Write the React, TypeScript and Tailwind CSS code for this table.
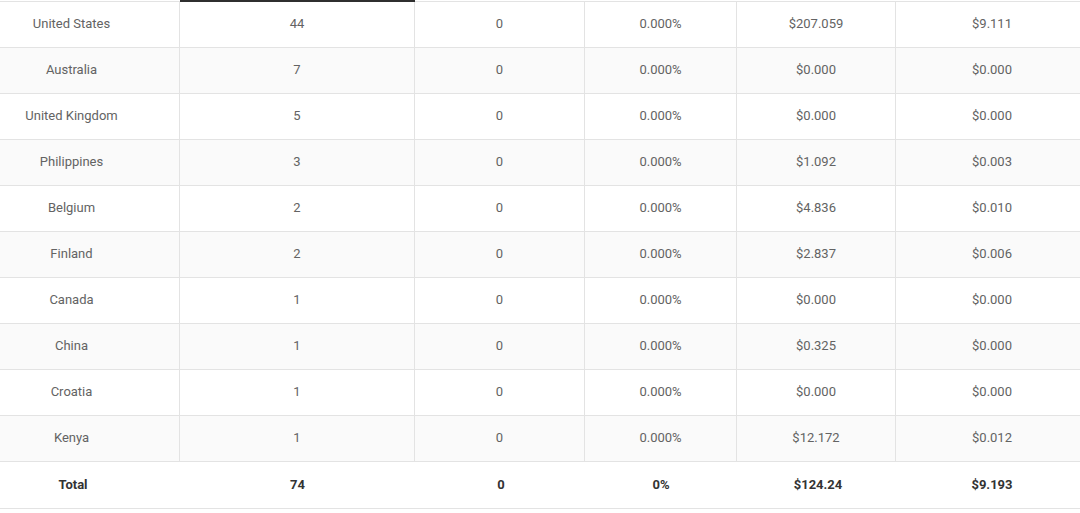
import React from 'react'

type Row = {
  country: string
  clicks: string
  conv: string
  rate: string
  spend: string
  cpc: string
}

const rows: Row[] = [
  { country: 'United States', clicks: '44', conv: '0', rate: '0.000%', spend: '$207.059', cpc: '$9.111' },
  { country: 'Australia', clicks: '7', conv: '0', rate: '0.000%', spend: '$0.000', cpc: '$0.000' },
  { country: 'United Kingdom', clicks: '5', conv: '0', rate: '0.000%', spend: '$0.000', cpc: '$0.000' },
  { country: 'Philippines', clicks: '3', conv: '0', rate: '0.000%', spend: '$1.092', cpc: '$0.003' },
  { country: 'Belgium', clicks: '2', conv: '0', rate: '0.000%', spend: '$4.836', cpc: '$0.010' },
  { country: 'Finland', clicks: '2', conv: '0', rate: '0.000%', spend: '$2.837', cpc: '$0.006' },
  { country: 'Canada', clicks: '1', conv: '0', rate: '0.000%', spend: '$0.000', cpc: '$0.000' },
  { country: 'China', clicks: '1', conv: '0', rate: '0.000%', spend: '$0.325', cpc: '$0.000' },
  { country: 'Croatia', clicks: '1', conv: '0', rate: '0.000%', spend: '$0.000', cpc: '$0.000' },
  { country: 'Kenya', clicks: '1', conv: '0', rate: '0.000%', spend: '$12.172', cpc: '$0.012' },
]

const cols = 'grid grid-cols-[180px_235px_170px_152px_159px_184px]'

export default function App() {
  return (
    <div className="w-[1080px] h-[513px] overflow-hidden bg-white font-['Roboto',sans-serif] text-[13px]">
      {/* top edge, header scrolled out of view */}
      <div className={cols}>
        <div className="h-px" />
        <div className="h-[2px] bg-[#2f2f2f]" />
      </div>
      <div className="-mt-px border-t border-[#e3e3e3]" />

      {rows.map((r, i) => (
        <div
          key={r.country}
          className={`${cols} h-[46px] border-b border-[#e3e3e3] text-[#636363] ${i % 2 === 1 ? 'bg-[#fafafa]' : 'bg-white'}`}
        >
          <div className="flex items-center justify-center pr-9 pb-[2px] border-r border-[#e3e3e3]">{r.country}</div>
          <div className="flex items-center justify-center pb-[2px] border-r border-[#e3e3e3]">{r.clicks}</div>
          <div className="flex items-center justify-center pb-[2px] border-r border-[#e3e3e3]">{r.conv}</div>
          <div className="flex items-center justify-center pb-[2px] border-r border-[#e3e3e3]">{r.rate}</div>
          <div className="flex items-center justify-center pb-[2px] border-r border-[#e3e3e3]">{r.spend}</div>
          <div className="flex items-center justify-center pb-[2px] pl-2">{r.cpc}</div>
        </div>
      ))}

      {/* Total */}
      <div className={`${cols} h-[47px] border-b border-[#e3e3e3] font-bold text-[#333]`}>
        <div className="flex items-center justify-center pr-[34px]">Total</div>
        <div className="flex items-center justify-center">74</div>
        <div className="flex items-center justify-center pl-[2px]">0</div>
        <div className="flex items-center justify-center">0%</div>
        <div className="flex items-center justify-center pl-[3px]">$124.24</div>
        <div className="flex items-center justify-center pl-2">$9.193</div>
      </div>
    </div>
  )
}
